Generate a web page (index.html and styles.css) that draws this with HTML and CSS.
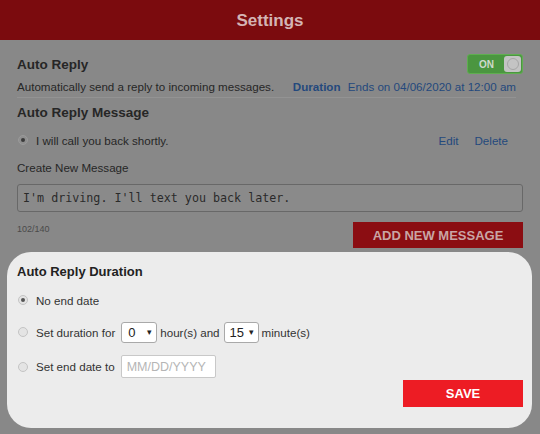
FILE: index.html
```html
<!DOCTYPE html>
<html>
<head>
  <title>Settings</title>
  <link rel="stylesheet" href="styles.css">
</head>
<body>
  <header class="topbar">
    <h1>Settings</h1>
  </header>

  <main class="settings">
    <section class="group auto-reply">
      <div class="row">
        <h2>Auto Reply</h2>
        <span class="toggle">
          <span class="toggle-label">ON</span>
          <span class="toggle-knob"><span></span></span>
        </span>
      </div>
      <div class="row desc">
        <span>Automatically send a reply to incoming messages.</span>
        <span class="duration"><b>Duration</b> Ends on 04/06/2020 at 12:00 am</span>
      </div>
    </section>

    <section class="group">
      <h2>Auto Reply Message</h2>
      <div class="row msg-row">
        <label class="option"><span class="radio checked"></span>I will call you back shortly.</label>
        <span class="actions"><a>Edit</a><a>Delete</a></span>
      </div>
      <div class="field-label">Create New Message</div>
      <div class="message-input">I'm driving. I'll text you back later.</div>
      <div class="row counter-row">
        <span class="counter">102/140</span>
        <button class="btn btn-add">ADD NEW MESSAGE</button>
      </div>
    </section>
  </main>

  <div class="sheet">
    <h3>Auto Reply Duration</h3>
    <label class="option choice"><span class="radio checked"></span>No end date</label>
    <label class="option choice choice-duration">
      <span class="radio"></span>Set duration for
      <span class="select select-hours">0<i>&#9662;</i></span>
      hour(s) and
      <span class="select select-mins">15<i>&#9662;</i></span>
      minute(s)
    </label>
    <label class="option choice choice-date">
      <span class="radio"></span>Set end date to
      <span class="date-input">MM/DD/YYYY</span>
    </label>
    <div class="sheet-actions">
      <button class="btn btn-save">SAVE</button>
    </div>
  </div>
</body>
</html>
```

FILE: styles.css
```css
body {
  margin: 0;
  height: 434px;
  overflow: hidden;
  background-color: #888888;
  font-family: "Liberation Sans", Arial, sans-serif;
  color: #262626;
}

.topbar {
  height: 40px;
  background-color: #7b0b0e;
  display: flex;
  align-items: center;
  justify-content: center;
}

.topbar h1 {
  margin: 0 0 -2px 0;
  font-size: 17px;
  color: #d4b4b4;
}

.settings {
  padding: 14px 17px 0 17px;
}

.row {
  display: flex;
  align-items: center;
  justify-content: space-between;
}

h2 {
  margin: 0;
  font-size: 13.5px;
  line-height: 17px;
}

.auto-reply {
  border-bottom: 1px solid #939393;
  padding-bottom: 3px;
  margin-right: 7px;
}

.auto-reply .row:first-child {
  height: 20px;
  margin-right: -7px;
}

.toggle {
  display: flex;
  align-items: center;
  width: 52px;
  height: 16px;
  padding: 1px;
  background-color: #4b9640;
  border: 1px solid #5fae50;
  border-radius: 3px;
}

.toggle-label {
  flex: 1;
  text-align: center;
  font-size: 10px;
  font-weight: bold;
  color: #cfd9cc;
}

.toggle-knob {
  width: 17px;
  height: 16px;
  background-color: #c4c4c4;
  border-radius: 3px;
  display: flex;
  align-items: center;
  justify-content: center;
}

.toggle-knob span {
  width: 10px;
  height: 10px;
  border: 1px solid #a6a6a6;
  border-radius: 50%;
}

.desc {
  margin-top: 4px;
  height: 16px;
  font-size: 11.6px;
}

.duration {
  color: #24497d;
}

.duration b {
  margin-right: 4px;
}

.auto-reply + .group {
  padding-top: 6px;
}

.option {
  display: flex;
  align-items: center;
}

.radio {
  width: 8px;
  height: 8px;
  border: 1px solid #9a9a9a;
  border-radius: 50%;
  background-color: #8f8f8f;
  margin: 0 8px 0 1px;
  display: flex;
  align-items: center;
  justify-content: center;
}

.radio.checked::after {
  content: "";
  width: 4px;
  height: 4px;
  border-radius: 50%;
  background-color: #3a3a3a;
}

.msg-row {
  margin-top: 11px;
  height: 16px;
  font-size: 11.6px;
}

.actions {
  display: flex;
  gap: 16px;
  margin-right: 15px;
}

.actions a {
  color: #24497d;
}

.field-label {
  margin-top: 12px;
  font-size: 11.6px;
  line-height: 16px;
}

.message-input {
  margin-top: 8px;
  height: 26px;
  border: 1px solid #686868;
  border-radius: 3px;
  background-color: #8a8a8a;
  padding: 0 5px;
  font-family: "DejaVu Sans Mono", monospace;
  font-size: 11.7px;
  line-height: 27px;
  color: #2a2a2a;
}

.counter-row {
  margin-top: 10px;
  align-items: flex-start;
}

.counter {
  font-size: 9px;
  color: #4a4a4a;
  margin-top: 2px;
}

.btn {
  border: none;
  font-family: "Liberation Sans", Arial, sans-serif;
  font-size: 13px;
  font-weight: bold;
  height: 26px;
  padding: 0;
}

.btn-add {
  width: 170px;
  background-color: #8b0d12;
  color: #c9a5a5;
}

.sheet {
  margin: 4px 8px 0 7px;
  padding: 11px 9px 21px 10px;
  background-color: #ececec;
  border-radius: 24px;
  color: #333333;
}

h3 {
  margin: 0;
  font-size: 13px;
  line-height: 17px;
  color: #222222;
}

.choice {
  font-size: 11.6px;
  height: 16px;
  margin-top: 12px;
}

.choice-duration {
  margin-top: 13px;
  height: 22px;
}

.choice-date {
  height: 23px;
}

.sheet .radio {
  background-color: #e4e4e4;
  border-color: #c4c4c4;
}

.sheet .radio.checked::after {
  background-color: #555555;
}

.select {
  display: inline-flex;
  align-items: center;
  justify-content: space-between;
  width: 24px;
  height: 19px;
  padding: 0 4px 0 6px;
  margin: 0 3px 0 6px;
  background-color: #ffffff;
  border: 1px solid #a9a9a9;
  border-radius: 3px;
  font-size: 13px;
  color: #222222;
}

.select i {
  font-style: normal;
  font-size: 9px;
}

.select-mins {
  margin-left: 4px;
  padding-left: 5px;
}

.date-input {
  display: inline-flex;
  align-items: center;
  width: 88px;
  height: 21px;
  margin-left: 6px;
  padding-left: 5px;
  background-color: #ffffff;
  border: 1px solid #c8c8c8;
  border-radius: 2px;
  font-size: 12.5px;
  color: #b5b5b5;
}

.sheet-actions {
  display: flex;
  justify-content: flex-end;
  margin-top: 2px;
}

.btn-save {
  width: 120px;
  height: 27px;
  background-color: #ed1c24;
  color: #ffffff;
}
```
